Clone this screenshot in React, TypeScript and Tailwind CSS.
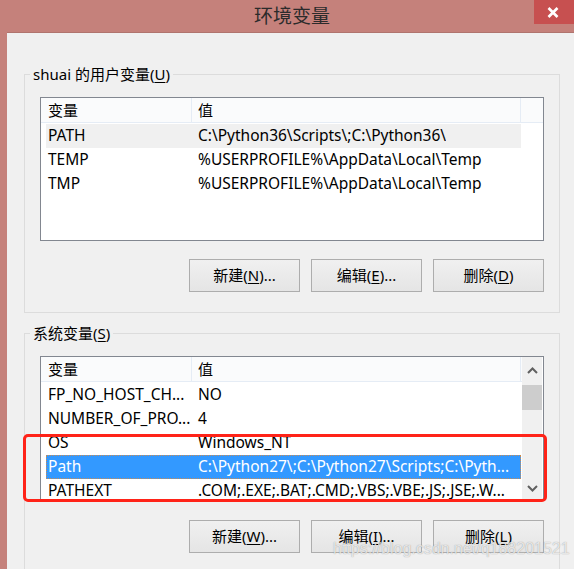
import React from "react";

const FONT = "font-['Noto_Sans','Noto_Sans_CJK_SC',sans-serif]";

function Chevron({ up }: { up?: boolean }) {
  return (
    <svg width="11" height="7" viewBox="0 0 11 7" className="block">
      <polyline
        points={up ? "1,6 5.5,1.5 10,6" : "1,1 5.5,5.5 10,1"}
        fill="none"
        stroke="#606060"
        strokeWidth="2"
      />
    </svg>
  );
}

function Btn({ label, k, dots }: { label: string; k: string; dots?: boolean }) {
  return (
    <div className="w-[111px] h-[33px] border border-[#adadad] bg-linear-to-b from-[#f0f0f0] to-[#e5e5e5] flex items-center justify-center text-[15px] text-black">
      <span>
        {label}(<u className="underline-offset-2">{k}</u>){dots ? "..." : ""}
      </span>
    </div>
  );
}

type Row = { name: string; value: string; state?: "gray" | "blue" };

function Header() {
  return (
    <div className="h-[25px] flex bg-[#fafbfc] border-b border-[#e5ecf5] text-[15px] leading-[24px] shrink-0">
      <div className="w-[151px] pl-[7px] border-r border-[#e5ecf5]">变量</div>
      <div className="w-[329px] pl-[6px] border-r border-[#e5ecf5]">值</div>
    </div>
  );
}

function Rows({ rows }: { rows: Row[] }) {
  return (
    <div className="pt-[1px] flex flex-col">
      {rows.map((r) => (
        <div
          key={r.name}
          className={
            "ml-[5px] w-[475px] h-[24px] shrink-0 flex items-center text-[15.5px] whitespace-nowrap " +
            (r.state === "blue"
              ? "bg-[#3399ff] text-white border border-dotted border-[#c98b52]"
              : r.state === "gray"
              ? "bg-[#f0f0f0] text-black"
              : "text-black")
          }
        >
          <div className={"w-[150px] pl-[2px] overflow-hidden " + (r.state === "blue" ? "-ml-[1px]" : "")}>{r.name}</div>
          <div className="pl-[2px] overflow-hidden">{r.value}</div>
        </div>
      ))}
    </div>
  );
}

function GroupLabel({ text, k }: { text: string; k: string }) {
  return (
    <div className="-mt-[11px] -ml-[10px] px-[3px] bg-[#f0f0f0] w-fit h-[20px] leading-[20px] text-[15px] text-black">
      {text}(<u className="underline-offset-2">{k}</u>)
    </div>
  );
}

export default function App() {
  const userRows: Row[] = [
    { name: "PATH", value: "C:\\Python36\\Scripts\\;C:\\Python36\\", state: "gray" },
    { name: "TEMP", value: "%USERPROFILE%\\AppData\\Local\\Temp" },
    { name: "TMP", value: "%USERPROFILE%\\AppData\\Local\\Temp" },
  ];
  const sysRows: Row[] = [
    { name: "FP_NO_HOST_CH...", value: "NO" },
    { name: "NUMBER_OF_PRO...", value: "4" },
    { name: "OS", value: "Windows_NT" },
    { name: "Path", value: "C:\\Python27\\;C:\\Python27\\Scripts;C:\\Pyth...", state: "blue" },
    { name: "PATHEXT", value: ".COM;.EXE;.BAT;.CMD;.VBS;.VBE;.JS;.JSE;.W..." },
  ];

  return (
    <div className={"relative w-[574px] h-[569px] overflow-hidden bg-[#c5817b] flex flex-col " + FONT}>
      {/* title bar */}
      <div className="h-[32px] shrink-0 flex items-start">
        <div className="ml-[254px] mt-[4px] text-[19px] leading-[24px] text-[#2b2b2b]">环境变量</div>
        <div className="ml-auto w-[40px] h-[24px] bg-[#c75050] flex items-center justify-center pr-[3px]">
          <svg width="12" height="11" viewBox="0 0 12 11">
            <line x1="1.5" y1="1" x2="10.5" y2="10" stroke="white" strokeWidth="2.6" />
            <line x1="10.5" y1="1" x2="1.5" y2="10" stroke="white" strokeWidth="2.6" />
          </svg>
        </div>
      </div>

      {/* client area */}
      <div className="flex-1 ml-[7px] bg-[#f0f0f0] border-t border-[#b0746e] flex flex-col">
        {/* user vars */}
        <div className="ml-[17px] mt-[41px] w-[536px] border border-[#dcdcdc] px-[15px] pb-[20px] flex flex-col">
          <GroupLabel text="shuai 的用户变量" k="U" />
          <div className="mt-[13px] h-[144px] border border-[#828790] bg-white flex flex-col">
            <div className="flex">
              <Header />
              <div className="flex-1 h-[25px] bg-[#fafbfc] border-b border-[#e5ecf5]" />
            </div>
            <Rows rows={userRows} />
          </div>
          <div className="mt-[18px] flex justify-end gap-[11px]">
            <Btn label="新建" k="N" dots />
            <Btn label="编辑" k="E" dots />
            <Btn label="删除" k="D" />
          </div>
        </div>

        {/* system vars */}
        <div className="ml-[17px] mt-[20px] w-[536px] border border-[#dcdcdc] px-[15px] pb-[20px] flex flex-col">
          <GroupLabel text="系统变量" k="S" />
          <div className="mt-[13px] h-[145px] border border-[#828790] bg-white flex overflow-hidden">
            <div className="w-[481px] flex flex-col overflow-hidden">
              <Header />
              <Rows rows={sysRows} />
            </div>
            <div className="w-[20px] bg-[#f0f0f0] flex flex-col">
              <div className="h-[27px] flex items-center justify-center">
                <Chevron up />
              </div>
              <div className="mt-[1px] h-[25px] bg-[#cdcdcd]" />
              <div className="flex-1" />
              <div className="h-[24px] flex items-center justify-center">
                <Chevron />
              </div>
            </div>
          </div>
          <div className="mt-[19px] flex justify-end gap-[11px]">
            <Btn label="新建" k="W" dots />
            <Btn label="编辑" k="I" dots />
            <Btn label="删除" k="L" />
          </div>
        </div>
      </div>

      {/* red annotation */}
      <div className="absolute left-[23px] top-[434px] w-[524px] h-[68px] border-[3px] border-[#ff2318] rounded-[5px]" />

      {/* watermark */}
      <div className="absolute left-[333px] top-[537px] text-[16px] font-['Liberation_Sans',Arial,sans-serif] text-white/75 [text-shadow:0_0_1px_rgba(80,80,80,0.6)] whitespace-nowrap">
        https://blog.csdn.net/q188201521
      </div>
    </div>
  );
}
